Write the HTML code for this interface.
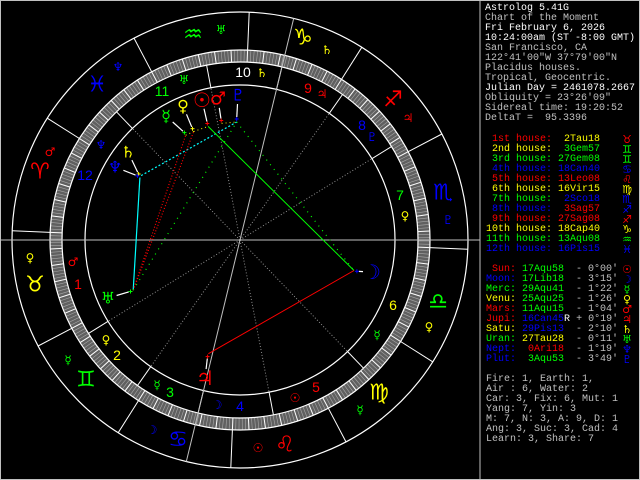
<!DOCTYPE html>
<html><head><meta charset="utf-8"><style>
html,body{margin:0;padding:0;background:#000;width:640px;height:480px;overflow:hidden}
#c{position:absolute;left:0;top:0}
pre{position:absolute;margin:0;font-family:"Liberation Mono",monospace;font-size:10px;line-height:10px;color:#c0c0c0;white-space:pre}
.w{color:#fff}.r{color:#ff0000}.y{color:#ffff00}.g{color:#00ff00}.b{color:#0000ff}
.gc{position:absolute;left:620px;width:14px;font-family:"DejaVu Sans",sans-serif;font-size:11px}
.gc div{height:10px;line-height:10px;text-align:center;overflow:visible}
</style></head><body>
<svg id="c" width="640" height="480" xmlns="http://www.w3.org/2000/svg"></svg>
<pre style="left:485px;top:4px"><span class="w">Astrolog 5.41G</span>
Chart of the Moment
<span class="w">Fri February 6, 2026</span>
<span class="w">10:24:00am (ST -8:00 GMT)</span>
San Francisco, CA
122°41'00"W 37°79'00"N
Placidus houses.
Tropical, Geocentric.
<span class="w">Julian Day = 2461078.2667</span>
Obliquity = 23°26'09"
Sidereal time: 19:20:52
DeltaT =  95.3396</pre>
<pre style="left:486px;top:135px"><span class="r"> 1st house:</span>  <span class="y">2Tau18</span>
<span class="y"> 2nd house:</span>  <span class="g">3Gem57</span>
<span class="g"> 3rd house:</span> <span class="g">27Gem08</span>
<span class="b"> 4th house:</span> <span class="b">18Can40</span>
<span class="r"> 5th house:</span> <span class="r">13Leo08</span>
<span class="y"> 6th house:</span> <span class="y">16Vir15</span>
<span class="g"> 7th house:</span>  <span class="b">2Sco18</span>
<span class="b"> 8th house:</span>  <span class="r">3Sag57</span>
<span class="r"> 9th house:</span> <span class="r">27Sag08</span>
<span class="y">10th house:</span> <span class="y">18Cap40</span>
<span class="g">11th house:</span> <span class="g">13Aqu08</span>
<span class="b">12th house:</span> <span class="b">16Pis15</span></pre>
<div class="gc" style="top:135px"><div class="r">♉</div><div class="g">♊</div><div class="g">♊</div><div class="b">♋</div><div class="r">♌</div><div class="y">♍</div><div class="b">♏</div><div class="b">♐</div><div class="r">♐</div><div class="y">♑</div><div class="g">♒</div><div class="b">♓</div></div>
<pre style="left:486px;top:265px"><span class="r"> Sun:</span> <span class="g">17Aqu58</span>  - 0°00'
<span class="b">Moon:</span> <span class="g">17Lib18</span>  - 3°15'
<span class="g">Merc:</span> <span class="g">29Aqu41</span>  - 1°22'
<span class="y">Venu:</span> <span class="g">25Aqu25</span>  - 1°26'
<span class="r">Mars:</span> <span class="g">11Aqu15</span>  - 1°04'
<span class="r">Jupi:</span> <span class="b">16Can45</span><span class="w">R</span> + 0°19'
<span class="y">Satu:</span> <span class="b">29Pis13</span>  - 2°10'
<span class="g">Uran:</span> <span class="y">27Tau28</span>  - 0°11'
<span class="b">Nept:</span>  <span class="r">0Ari18</span>  - 1°19'
<span class="b">Plut:</span>  <span class="g">3Aqu53</span>  - 3°49'

Fire: 1, Earth: 1,
Air : 6, Water: 2
Car: 3, Fix: 6, Mut: 1
Yang: 7, Yin: 3
M: 7, N: 3, A: 9, D: 1
Ang: 3, Suc: 3, Cad: 4
Learn: 3, Share: 7</pre>
<div class="gc" style="top:265px"><div class="r">☉</div><div class="b">☽</div><div class="g">☿</div><div class="y">♀</div><div class="r">♂</div><div class="r">♃</div><div class="y">♄</div><div class="g">♅</div><div class="b">♆</div><div class="b">♇</div></div>
<script>
var s=document.getElementById('c'),o='';
var CX=240,CY=240,ASC=32.3;
function A(L){return (180+L-ASC)*Math.PI/180}
function P(r,L){var a=A(L);return [CX+r*Math.cos(a),CY-r*Math.sin(a)]}
function ln(a,b,c,w,d){o+='<line x1="'+a[0].toFixed(1)+'" y1="'+a[1].toFixed(1)+'" x2="'+b[0].toFixed(1)+'" y2="'+b[1].toFixed(1)+'" stroke="'+c+'" stroke-width="'+(w||1)+'"'+(d?' stroke-dasharray="'+d+'"':'')+'/>';}
function tx(x,y,t,c,sz,f){o+='<text x="'+x+'" y="'+y+'" fill="'+c+'" font-size="'+sz+'" text-anchor="middle" dominant-baseline="central" font-family="'+(f||'DejaVu Sans')+'">'+t+'</text>';}
o+='<rect x="0.5" y="0.5" width="639" height="479" fill="none" stroke="#c0c0c0"/>';
ln([480,0],[480,480],'#c0c0c0');
o+='<circle cx="240" cy="240" r="184" fill="none" stroke="#606060" stroke-width="12"/>';
for(var d=0;d<360;d++){ln(P(178,d),P(190,d),d%5?'#a8a8a8':'#fff',d%5?0.6:1);}
[228,190,178,155].forEach(function(r){o+='<circle cx="240" cy="240" r="'+r+'" fill="none" stroke="#fff" stroke-width="1.2"/>';});
for(var k=0;k<12;k++)ln(P(190,k*30),P(228,k*30),'#fff');
var H=[32.3,63.95,87.13,108.67,133.13,166.25,212.3,243.95,267.13,288.67,313.13,346.25];
H.forEach(function(h,i){ln(P(155,h),P(178,h),'#fff');if(i%3)ln([CX,CY],P(155,h),'#909090',1,'1 2');});
ln([0,240],[480,240],'#c0c0c0');
ln(P(228,288.67),P(228,108.67),'#c0c0c0');
var PL={Sun:317.97,Moon:197.3,Merc:329.68,Venu:325.42,Mars:311.25,Jupi:106.75,Satu:359.22,Uran:57.47,Nept:0.3,Plut:303.88};
function D(n){return P(118,PL[n])}
ln(D('Uran'),D('Nept'),'#00ffff',1.2);
ln(D('Satu'),D('Plut'),'#00ffff',1.2,'2 2');
ln(D('Uran'),D('Merc'),'#ff0000',1.2,'1 2');
ln(D('Uran'),D('Venu'),'#ff0000',1.2,'1 2');
ln(D('Uran'),D('Plut'),'#00ff00',1.2,'1 5');
ln(D('Plut'),D('Moon'),'#00ff00',1.2,'1 5');
ln(D('Sun'),D('Moon'),'#00ff00',1);
ln(D('Moon'),D('Jupi'),'#ff0000',1);
ln(D('Merc'),D('Venu'),'#ffff00',1,'1 3');
ln(D('Venu'),D('Sun'),'#ffff00',1,'1 3');
ln(D('Mars'),D('Plut'),'#ffff00',1,'1 3');
var G=[['Sun','☉','#f00',202,100,20],['Moon','☽','#00f',372,272,20],['Merc','☿','#0f0',166,116,16],['Venu','♀','#ff0',183,106,16],['Mars','♂','#f00',218,99,18],['Jupi','♃','#f00',205,378,20],['Satu','♄','#ff0',128,152,16],['Uran','♅','#0f0',108,298,16],['Nept','♆','#00f',115,167,16],['Plut','♇','#00f',238,95,16]];
G.forEach(function(g){var d=P(121,PL[g[0]]);var dx=d[0]-g[3],dy=d[1]-g[4],L=Math.hypot(dx,dy);
ln([g[3]+dx/L*9,g[4]+dy/L*9],[d[0]-dx/L*2,d[1]-dy/L*2],'#fff',1.2);
ln([d[0]-2,d[1]],[d[0]+2,d[1]],g[2]);ln([d[0],d[1]-2],[d[0],d[1]+2],g[2]);
tx(g[3],g[4],g[1],g[2],g[5]);});
var Z=[['♒','#0f0',193,35,22],['♅','#0f0',221,30,12],['♑','#ff0',303,38,22],['♄','#ff0',327,50,12],['♐','#f00',393,100,22],['♃','#f00',408,118,12],['♏','#00f',443,193,22],['♇','#00f',448,220,12],['♎','#0f0',438,302,22],['♀','#ff0',429,327,12],['♍','#ff0',379,393,22],['☿','#0f0',360,410,12],['♌','#f00',285,445,22],['☉','#f00',258,448,12],['♋','#00f',178,440,22],['☽','#00f',152,430,12],['♊','#0f0',86,380,22],['☿','#0f0',68,360,12],['♉','#ff0',35,285,22],['♀','#ff0',30,258,12],['♈','#f00',40,172,22],['♂','#f00',50,152,12],['♓','#00f',97,85,22],['♆','#00f',118,67,12],
['♂','#f00',73,262,12],['♀','#ff0',106,340,12],['☿','#0f0',157,385,12],['☽','#00f',217,405,12],['☉','#f00',295,398,12],['☿','#0f0',377,335,12],['♀','#ff0',405,216,12],['♇','#00f',372,137,12],['♃','#f00',322,94,12],['♄','#ff0',262,73,12],['♅','#0f0',184,80,12],['♆','#00f',101,145,12]];
Z.forEach(function(z){tx(z[2],z[3],z[0],z[1],z[4]);});
var N=[['1','#f00',78,284],['2','#ff0',117,355],['3','#0f0',170,392],['4','#00f',240,406],['5','#f00',316,387],['6','#ff0',393,305],['7','#0f0',400,195],['8','#00f',362,125],['9','#f00',308,88],['10','#fff',243,72],['11','#0f0',162,91],['12','#00f',85,175]];
N.forEach(function(n){tx(n[2],n[3],n[0],n[1],14,'Liberation Sans');});
s.innerHTML=o;
</script>
</body></html>
